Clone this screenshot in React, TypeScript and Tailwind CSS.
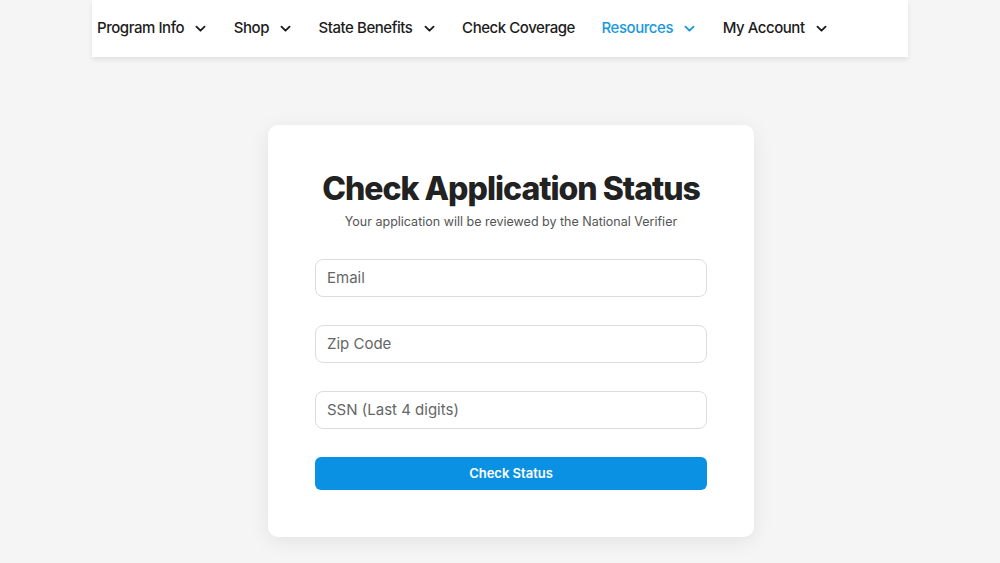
import React from "react";

function Chevron({ className = "" }: { className?: string }) {
  return (
    <svg width="13" height="13" viewBox="0 0 24 24" fill="none" stroke="currentColor" strokeWidth="3.4" strokeLinecap="round" strokeLinejoin="round" className={className}>
      <path d="M4.5 8.5l7.5 7.5 7.5-7.5" />
    </svg>
  );
}

const items: { label: string; chevron: boolean; active?: boolean }[] = [
  { label: "Program Info", chevron: true },
  { label: "Shop", chevron: true },
  { label: "State Benefits", chevron: true },
  { label: "Check Coverage", chevron: false },
  { label: "Resources", chevron: true, active: true },
  { label: "My Account", chevron: true },
];

export default function App() {
  return (
    <div
      className="w-[1000px] h-[563px] overflow-hidden bg-[#f5f5f5] flex flex-col items-center"
      style={{ fontFamily: "Inter, 'Noto Sans', sans-serif" }}
    >
      <header className="w-[816px] h-[57px] bg-white shadow-[0_3px_5px_rgba(0,0,0,0.08)] flex items-center pl-[5px] shrink-0">
        <nav className="flex items-center gap-[26.6px]">
          {items.map((it) => (
            <div
              key={it.label}
              className={`flex items-center gap-[10px] text-[15px] font-medium tracking-[-0.45px] ${it.active ? "text-[#1a98dc]" : "text-[#1c1c1c]"}`}
            >
              <span>{it.label}</span>
              {it.chevron && <Chevron />}
            </div>
          ))}
        </nav>
      </header>

      <main className="flex-1 flex justify-center pt-[68px] pl-[22px]">
        <div className="w-[486px] h-[412px] bg-white rounded-[10px] shadow-[0_4px_20px_rgba(0,0,0,0.08)] px-[47px] pt-[45px] flex flex-col">
          <h1 className="text-center whitespace-nowrap text-[32px] font-extrabold tracking-[-1px] text-[#222] leading-[38px]">
            Check Application Status
          </h1>
          <p className="text-center whitespace-nowrap text-[12.5px] text-[#555] mt-[5px] leading-[18px]">
            Your application will be reviewed by the National Verifier
          </p>
          <div className="flex flex-col gap-[28px] mt-[28px]">
            {["Email", "Zip Code", "SSN (Last 4 digits)"].map((ph) => (
              <div
                key={ph}
                className="h-[38px] rounded-[8px] border border-[#dcdcdc] bg-white flex items-center px-[11px] text-[15px] text-[#666]"
              >
                {ph}
              </div>
            ))}
          </div>
          <button className="mt-[28px] h-[33px] rounded-[6px] bg-[#0a91e3] text-white text-[13px] font-semibold">
            Check Status
          </button>
        </div>
      </main>
    </div>
  );
}
